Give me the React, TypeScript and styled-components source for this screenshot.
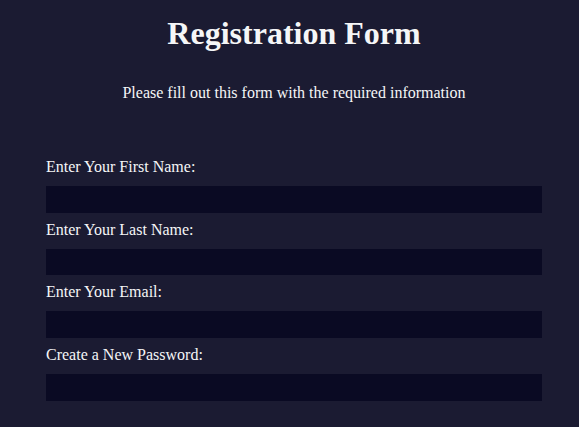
import React from "react";
import styled, { createGlobalStyle } from "styled-components";

const GlobalStyle = createGlobalStyle`
  html, body {
    margin: 0;
    padding: 0;
    background-color: #1b1b32;
  }
  body {
    color: #f5f6f7;
    font-family: "Liberation Serif", "Times New Roman", serif;
    font-size: 16px;
  }
  * { box-sizing: border-box; }
`;

const Page = styled.main`
  min-height: 427px;
  padding: 15px 0 0 9px;
  display: flex;
  flex-direction: column;
  align-items: center;
`;

const Title = styled.h1`
  margin: 0;
  font-size: 32px;
  line-height: 37px;
  font-weight: bold;
  text-align: center;
`;

const Intro = styled.p`
  margin: 32px 0 0;
  font-size: 16px;
  line-height: 18px;
  text-align: center;
`;

const Form = styled.form`
  width: 496px;
  margin-top: 56px;
  display: flex;
  flex-direction: column;
  gap: 8px;
`;

const Field = styled.label`
  display: flex;
  flex-direction: column;
  gap: 10px;
  font-size: 16px;
  line-height: 18px;
`;

const Input = styled.input`
  display: block;
  width: 100%;
  height: 26.67px;
  margin: 0;
  padding: 1px 2px;
  background-color: #0a0a23;
  border: 1px solid #0a0a23;
  color: #ffffff;
  font-family: inherit;
  font-size: 13.33px;
  outline: none;
`;

const fields = [
  { label: "Enter Your First Name:", type: "text" },
  { label: "Enter Your Last Name:", type: "text" },
  { label: "Enter Your Email:", type: "email" },
  { label: "Create a New Password:", type: "password" },
];

export default function App() {
  return (
    <>
      <GlobalStyle />
      <Page>
        <Title>Registration Form</Title>
        <Intro>Please fill out this form with the required information</Intro>
        <Form onSubmit={(e) => e.preventDefault()}>
          {fields.map((f) => (
            <Field key={f.label}>
              {f.label}
              <Input type={f.type} />
            </Field>
          ))}
        </Form>
      </Page>
    </>
  );
}
